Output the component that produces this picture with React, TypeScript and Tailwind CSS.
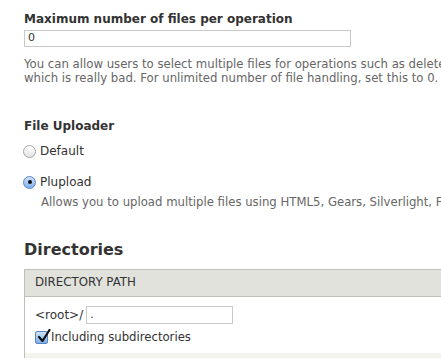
function Radio({ checked }: { checked?: boolean }) {
  return (
    <span
      className={`inline-flex h-[13px] w-[13px] shrink-0 items-center justify-center rounded-full border ${
        checked
          ? "border-[#5a87c2] bg-gradient-to-b from-[#cfe2fa] to-[#7eaee9]"
          : "border-[#a5a5a5] bg-gradient-to-b from-white to-[#e4e4e4]"
      }`}
    >
      {checked && <span className="h-[4px] w-[4px] rounded-full bg-[#111]" />}
    </span>
  );
}

function Checkbox() {
  return (
    <span className="relative inline-flex h-[13px] w-[13px] shrink-0 items-center justify-center rounded-[2px] border border-[#5a87c2] bg-gradient-to-b from-[#cfe2fa] to-[#7eaee9]">
      <svg viewBox="0 0 14 14" className="absolute -top-[3px] left-[1px] h-[14px] w-[14px]">
        <path d="M2 8 L5.5 12 L12.5 1" fill="none" stroke="#111" strokeWidth="2.2" strokeLinecap="round" strokeLinejoin="round" />
      </svg>
    </span>
  );
}

export default function App() {
  return (
    <div className="h-[358px] w-[441px] overflow-hidden bg-white font-['Lucida_Grande','DejaVu_Sans',sans-serif] text-[#333]">
      <div className="w-[760px] pl-6">
        <div className="pt-[10px]">
          <label className="block text-[12px] font-bold leading-[18px]">Maximum number of files per operation</label>
          <div className="mt-[2px] flex h-[17px] w-[327px] items-center border border-[#c9c9c9] px-[3px] text-[11px]">0</div>
          <p className="mt-[10px] text-[11.7px] leading-[14px] text-[#666]">
            You can allow users to select multiple files for operations such as delete, move, copy and so on at once,
            <br />
            which is really bad. For unlimited number of file handling, set this to 0.
          </p>
        </div>

        <div className="mt-[32px]">
          <div className="text-[12px] font-bold leading-[18px]">File Uploader</div>
          <div className="mt-[8px] flex items-center gap-[4px] -ml-[1px] text-[12px] leading-[16px]">
            <Radio />
            <span>Default</span>
          </div>
          <div className="mt-[15px] flex items-center gap-[4px] -ml-[1px] text-[12px] leading-[16px]">
            <Radio checked />
            <span>Plupload</span>
          </div>
          <p className="mt-[5px] pl-[17px] text-[11.7px] leading-[14px] text-[#666]">
            Allows you to upload multiple files using HTML5, Gears, Silverlight, Flash, BrowserPlus or normal forms.
          </p>
        </div>

        <h2 className="mt-[31px] text-[16px] font-bold leading-[20px]">Directories</h2>

        <div className="mt-[9px] border border-[#bebfb9]">
          <div className="flex h-[27px] items-center border-b border-[#bebfb9] bg-[#e1e2dc] px-[10px] text-[11.8px] uppercase">
            Directory path
          </div>
          <div className="bg-white px-[10px] pt-[9px] pb-[8px]">
            <div className="flex items-center gap-[3px] text-[12px]">
              <span>&lt;root&gt;/</span>
              <div className="flex h-[18px] w-[147px] items-center border border-[#c9c9c9] px-[3px] text-[11px]">.</div>
            </div>
            <div className="mt-[5px] flex items-center gap-[3px] text-[11.7px] leading-[16px]">
              <Checkbox />
              <span>Including subdirectories</span>
            </div>
          </div>
          <div className="h-[20px] bg-[#f3f4ee]" />
        </div>
      </div>
    </div>
  );
}
